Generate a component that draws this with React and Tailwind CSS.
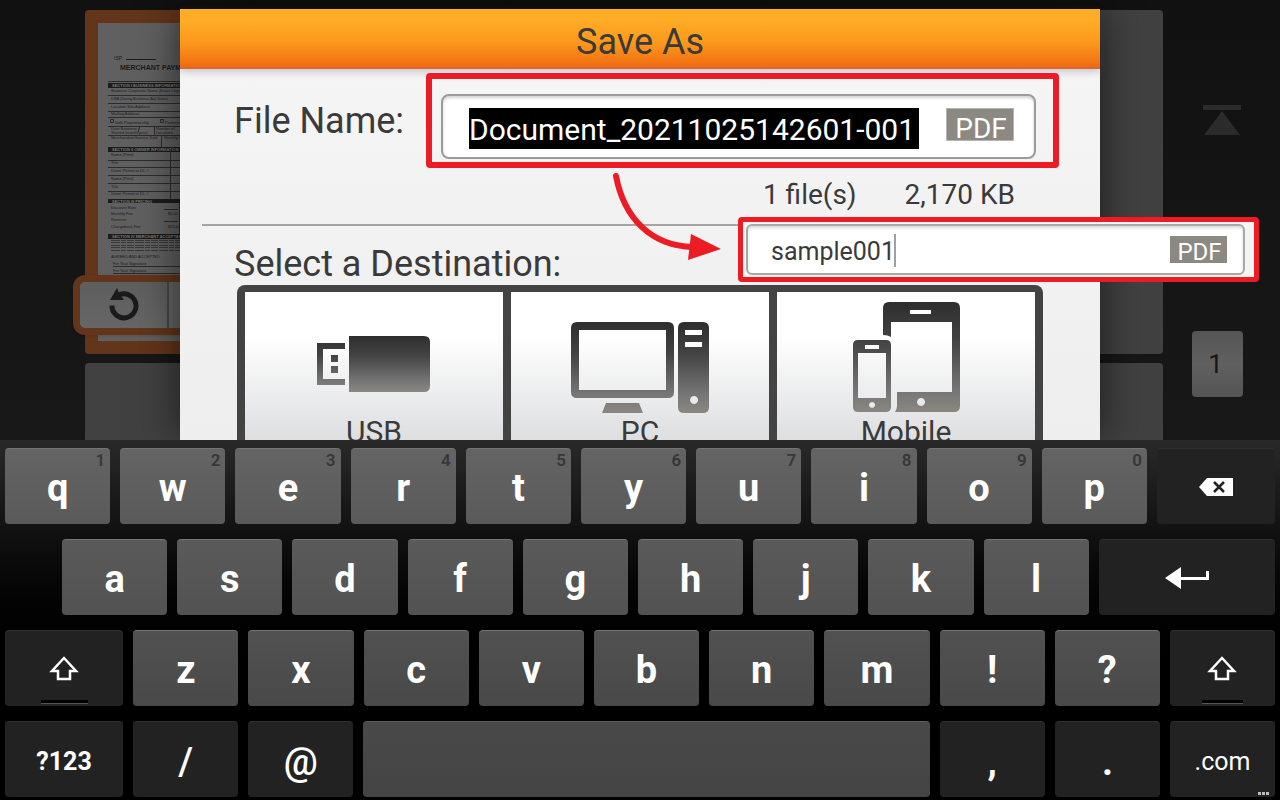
import React, { useState } from "react";

const DESTINATIONS = [
  { label: "USB", icon: UsbIcon },
  { label: "PC", icon: PcIcon },
  { label: "Mobile", icon: MobileIcon },
];

const ROW_ONE = [
  { key: "q", hint: "1" },
  { key: "w", hint: "2" },
  { key: "e", hint: "3" },
  { key: "r", hint: "4" },
  { key: "t", hint: "5" },
  { key: "y", hint: "6" },
  { key: "u", hint: "7" },
  { key: "i", hint: "8" },
  { key: "o", hint: "9" },
  { key: "p", hint: "0" },
];
const ROW_TWO = ["a", "s", "d", "f", "g", "h", "j", "k", "l"];
const ROW_THREE = ["z", "x", "c", "v", "b", "n", "m", "!", "?"];

function IconGradient({ id, y1, y2 }) {
  return (
    <linearGradient id={id} gradientUnits="userSpaceOnUse" x1="0" y1={y1} x2="0" y2={y2}>
      <stop offset="0" stopColor="#2e2e2e" />
      <stop offset="0.35" stopColor="#434343" />
      <stop offset="0.8" stopColor="#757575" />
      <stop offset="1" stopColor="#8a8780" />
    </linearGradient>
  );
}

function UsbIcon() {
  return (
    <svg className="flex-none" width="114" height="114" viewBox="0 0 114 114" aria-hidden="true">
      <defs>
        <IconGradient id="usb" y1="36" y2="92" />
      </defs>
      <g fill="url(#usb)">
        <path d="M0 43h28v6H6v30h22v6H0z" />
        <path d="M14 55h7v7h-7zM14 66h7v7h-7z" />
        <path d="M32 36h75q6 0 6 6v44q0 6-6 6H32z" />
      </g>
    </svg>
  );
}

function PcIcon() {
  return (
    <svg className="flex-none" width="140" height="114" viewBox="0 0 140 114" aria-hidden="true">
      <defs>
        <IconGradient id="pc" y1="22" y2="112" />
      </defs>
      <g fill="url(#pc)" fillRule="evenodd">
        <path d="M7 22h91q6 0 6 6v64q0 6-6 6H7q-6 0-6-6V28q0-6 6-6zM9 30v60h87V30z" />
        <path d="M36 103h33l4 10H32z" />
        <path d="M114 22h19q6 0 6 6v79q0 6-6 6h-19q-6 0-6-6V28q0-6 6-6zM115 30v5h17v-5zM115 42v5h17v-5zM124 96a4 4 0 1 0 .1 0z" />
      </g>
    </svg>
  );
}

function MobileIcon() {
  return (
    <svg className="flex-none" width="110" height="114" viewBox="0 0 110 114" aria-hidden="true">
      <defs>
        <IconGradient id="mobile" y1="2" y2="112" />
      </defs>
      <g fill="url(#mobile)" fillRule="evenodd">
        <path d="M38 2h65q6 0 6 6v98q0 6-6 6H44q2-3 2-6V92h55V22H40v15q-3-2-8-2V8q0-6 6-6zM59 10v4h21v-4zM70 98a4 4 0 1 0 .1 0z" />
        <path d="M7 40h28q5 0 5 5v62q0 5-5 5H7q-5 0-5-5V45q0-5 5-5zM7 53v45h28V53zM14 45v4h14v-4zM21 102a3 3 0 1 0 .1 0z" />
      </g>
    </svg>
  );
}

function ShiftIcon() {
  return (
    <svg width="30" height="26" viewBox="0 0 30 26" aria-hidden="true">
      <path d="M15 2L27 15h-6v8H9v-8H3z" fill="none" stroke="#fff" strokeWidth="2.5" />
    </svg>
  );
}

// Scanned form shown in the page thumbnail
function FormPreview() {
  return (
    <svg className="block" width="260" height="318" viewBox="0 0 260 318" aria-hidden="true">
      <rect width="260" height="318" fill="#606060" />
      <g fill="#1c1c1c" fontFamily="'Liberation Sans', Arial, sans-serif">
        <text x="16" y="37" fontSize="5">ISP:</text>
        <path d="M28 36h30v1H28z" />
        <text x="22" y="47" fontSize="7" fontWeight="bold">MERCHANT PAYMENT</text>
        <path d="M10 60h240v5H10zM10 124h240v5H10zM10 176h240v4H10zM10 211h240v5H10z" />
        <g fontSize="4" fontWeight="bold" fill="#7a7a7a">
          <text x="14" y="64">SECTION I    BUSINESS INFORMATION</text>
          <text x="14" y="128">SECTION II   OWNER INFORMATION</text>
          <text x="14" y="180">SECTION III  PRICING</text>
          <text x="14" y="215">SECTION IV   MERCHANT ACCEPTANCE</text>
        </g>
        <g fontSize="4">
          <text x="13" y="69">Business Corporate Name (Exact Legal Name)</text>
          <text x="13" y="77">DBA (Doing Business As) Name</text>
          <text x="13" y="85">Location Site Address</text>
          <text x="13" y="92">Mailing Address</text>
          <text x="17" y="101">Sole Proprietorship</text>
          <text x="67" y="101">Partnership</text>
          <text x="13" y="107">Date Business</text>
          <text x="13" y="111">Started (month/year)</text>
          <text x="58" y="107">Number of</text>
          <text x="58" y="111">Locations</text>
          <text x="13" y="116">Merchandise/Service Sold</text>
          <text x="66" y="116">Monthly Sales</text>
          <text x="13" y="133">Name (Print)</text>
          <text x="13" y="141">Title</text>
          <text x="13" y="149">Driver Permit or DL #</text>
          <text x="13" y="157">Name (Print)</text>
          <text x="13" y="165">Title</text>
          <text x="13" y="172">Driver Permit or DL #</text>
          <text x="13" y="186">Discount Rate</text>
          <text x="13" y="192">Monthly Fee</text>
          <text x="13" y="198">Reserve</text>
          <text x="13" y="205">Chargeback Fee</text>
          <text x="70" y="192">$5.00</text>
          <text x="70" y="205">$25.00</text>
          <text x="13" y="235">AGREED AND ACCEPTED</text>
          <text x="15" y="242">For Your Signature</text>
          <text x="15" y="249">For Your Signature</text>
        </g>
      </g>
      <g stroke="#2c2c2c" fill="none">
        <path d="M10 58.500h240M10 72.500h240M10 80.500h240M10 88.500h240M10 94.500h240M10 103.500h240M10 112.500h240M10 137.500h240M10 144.500h240M10 152.500h240M10 160.500h240M10 168.500h240" />
        <path d="M56.500 103v9M63.500 112v12M72.500 129v47M81.500 180v31M66 186.500h14M66 198.500h14M15 243.500h240M15 250.500h240M40 109l2-6" />
        <path d="M12.500 96.500h3v3h-3zM62.500 96.500h3v3h-3z" />
        <path d="M13 217.500h240M13 219.500h240M13 222.500h240M13 224.500h240M13 227.500h240M10 252.500h240" strokeDasharray="9 1 5 1 7 1" stroke="#383838" />
      </g>
    </svg>
  );
}

function Viewer() {
  return (
    <div className="col-start-1 row-start-1 flex min-w-0 bg-gradient-to-b from-[#111111] to-[#181818] pl-[85px]">
      <div className="flex min-w-0 flex-1 flex-col gap-[9px] pt-[10px]">
        <div className="relative h-[344px] flex-none rounded bg-gradient-to-r from-[#63351a] from-20% to-[#414141] to-50%">
          <div className="box-content h-[318px] w-1/4 overflow-hidden pl-[13px] pt-[13px]">
            <FormPreview />
          </div>
          <div className="absolute -left-3 top-[265px] flex h-[60px] w-[200px] rounded-xl border-[7px] border-[#63351a] bg-[#656565] shadow">
            <button aria-label="Rotate" className="flex w-[89px] items-center justify-center rounded-l-md border-r-2 border-[#474747] bg-gradient-to-b from-[#5e5e5e] to-[#666666]">
              <svg width="32" height="34" viewBox="0 0 32 34" aria-hidden="true">
                <path d="M10 7.500A12 12 0 1 1 4 17.500" fill="none" stroke="#1b1b1b" strokeWidth="5" />
                <path d="M9 0l2 5 5 7-14 0z" fill="#1b1b1b" />
              </svg>
            </button>
          </div>
        </div>
        <div className="flex-1 rounded-t bg-[#414141]"></div>
      </div>
      <div className="flex w-[117px] flex-none flex-col items-start pl-[29px] pt-[105px]">
        <button aria-label="First page" className="ml-[11px] block">
          <svg width="38" height="31" viewBox="0 0 38 31" aria-hidden="true">
            <path d="M0 0h38v5H0zM19 6l18 24H1z" fill="#2b2b2b" />
          </svg>
        </button>
        <div className="mt-[195px] flex h-[66px] w-[51px] items-center justify-center rounded-sm bg-gradient-to-b from-[#555555] via-[#606060] to-[#545454] pr-1 text-[26px] text-[#171717]">
          1
        </div>
      </div>
    </div>
  );
}

function DestinationButton({ label, icon: Icon }) {
  return (
    <button className="flex flex-1 flex-col items-center justify-start bg-gradient-to-b from-white from-25% to-[#d6d7da] pt-2">
      <Icon />
      <span className="text-[30px] leading-9">{label}</span>
    </button>
  );
}

function SaveAsDialog({ fileName, onChange }) {
  return (
    <div
      role="dialog"
      aria-label="Save As"
      className="relative z-10 col-start-1 row-start-1 mx-[180px] mt-[9px] flex flex-col bg-gradient-to-b from-[#f6f6f6] to-[#eeeeee] text-[#3a3a3a] shadow-[0_0_40px_rgba(0,0,0,0.6)]"
    >
      <h1 className="h-[60px] flex-none border-b-2 border-[#e0662a] bg-gradient-to-b from-[#ffac26] from-20% via-[#fb971b] via-60% to-[#f06a12] text-center text-[36px] leading-[66px] shadow-[0_2px_8px_rgba(60,60,110,0.3)]">
        Save As
      </h1>
      <div className="flex items-start pl-[54px] pr-[41px] pt-1">
        <label htmlFor="file-name" className="mt-6 flex-1 whitespace-nowrap text-[36px] leading-[48px]">
          File Name:
        </label>
        <div className="h-[95px] w-[633px] rounded border-[6px] border-[#ec1c24] pl-[9px] pr-[17px] pt-[15px]">
          <div className="flex h-[65px] items-center rounded-lg border-2 border-[#9b9b9b] bg-white pl-[26px] pr-5 pt-1 shadow-[inset_0_2px_3px_rgba(0,0,0,0.18)]">
            <input
              id="file-name"
              className="h-[41px] w-[450px] bg-black pt-[2px] text-[30px] text-white outline-none"
              defaultValue="Document_20211025142601-001"
            />
            <span className="-mt-2 ml-auto h-[33px] w-[68px] border border-[#b5b5b5] bg-[#8c8982] pl-[2px] text-center text-[28px] leading-[40px] text-white">
              PDF
            </span>
          </div>
        </div>
      </div>
      <div className="flex justify-end gap-12 pr-[85px] pt-2 text-[28px] leading-[38px]">
        <span>1 file(s)</span>
        <span>2,170 KB</span>
      </div>
      <hr className="mx-[22px] mt-[10px] border-t-2 border-[#a5a5a5]" />
      <h2 className="ml-[54px] mt-[13px] h-[46px] flex-none text-[36px] leading-[50px]">Select a Destination:</h2>
      <div className="mx-[57px] flex h-[180px] flex-none gap-2 rounded-t-lg border-x-8 border-t-[7px] border-[#434343] bg-[#434343]">
        {DESTINATIONS.map((item) => (
          <DestinationButton key={item.label} {...item} />
        ))}
      </div>

      {/* Edited name callout */}
      <svg className="absolute left-[425px] top-[159px]" width="125" height="105" viewBox="0 0 125 105" aria-hidden="true">
        <path d="M11 8C19 50 46 78 88 79" fill="none" stroke="#ec1c24" strokeWidth="6" strokeLinecap="round" />
        <path d="M86 66l30 15-33 11z" fill="#ec1c24" />
      </svg>
      <div className="absolute -right-[159px] top-[208px] w-[521px] rounded-sm border-[5px] border-[#ec1c24] bg-[#f4f4f4] py-[2px] pl-[3px] pr-[9px]">
        <div className="flex h-[51px] items-center rounded-md border-2 border-[#a8a8a8] bg-white pl-[23px] pr-4 shadow-[inset_0_2px_3px_rgba(0,0,0,0.15)]">
          <div className="flex items-center pt-[2px]">
            <input
              aria-label="New file name"
              className="w-[123px] bg-transparent pt-[3px] text-[25px] outline-none"
              value={fileName}
              onChange={(e) => onChange(e.target.value)}
            />
            <span className="h-[33px] w-[2px] bg-[#a0a0a0]"></span>
          </div>
          <span className="ml-auto h-[27px] w-[57px] bg-[#8c8982] pl-[2px] text-center text-[24px] leading-[33px] text-white">
            PDF
          </span>
        </div>
      </div>
    </div>
  );
}

function LetterKey({ label, hint, tone, onPress }) {
  return (
    <button
      onClick={() => onPress(label)}
      className={`relative flex-[105] rounded-sm border-t border-[#747474] pt-[3px] text-[38px] font-bold leading-none text-white ${tone}`}
    >
      {hint && (
        <span className="absolute right-[5px] top-px text-[17px] font-semibold leading-5 text-[#373737]">{hint}</span>
      )}
      {label}
    </button>
  );
}

function DarkKey({ className, children, ...rest }) {
  return (
    <button
      className={`relative flex items-center justify-center rounded-sm border-t border-[#303030] bg-[#222222] leading-none text-white ${className}`}
      {...rest}
    >
      {children}
    </button>
  );
}

function Keyboard({ onType, onDelete }) {
  return (
    <div className="z-20 flex flex-none flex-col gap-[15px] bg-gradient-to-b from-[#292929] to-black to-70% pb-[3px] pt-2">
      <div className="flex h-[76px] gap-[10px] px-[5px]">
        {ROW_ONE.map((k) => (
          <LetterKey key={k.key} label={k.key} hint={k.hint} tone="bg-gradient-to-b from-[#646464] to-[#5a5a5a]" onPress={onType} />
        ))}
        <DarkKey className="flex-[118]" aria-label="Backspace" onClick={onDelete}>
          <svg width="34" height="18" viewBox="0 0 34 18" aria-hidden="true">
            <path d="M0 9l8-9h26v18H8z" fill="#fff" />
            <path d="M15 4l10 10M25 4L15 14" stroke="#222" strokeWidth="2.5" />
          </svg>
        </DarkKey>
      </div>
      <div className="flex h-[76px] gap-[10px] pl-[62px] pr-[5px]">
        {ROW_TWO.map((k) => (
          <LetterKey key={k} label={k} tone="bg-gradient-to-b from-[#5a5a5a] to-[#525252]" onPress={onType} />
        ))}
        <DarkKey className="flex-[176]" aria-label="Enter">
          <svg width="44" height="24" viewBox="0 0 44 24" aria-hidden="true">
            <path d="M0 12L16 1v22zM16 11h25V5h3v9H16z" fill="#fff" />
          </svg>
        </DarkKey>
      </div>
      <div className="flex h-[76px] gap-[10px] px-[5px]">
        <DarkKey className="flex-[118]" aria-label="Shift">
          <ShiftIcon />
          <span className="absolute bottom-[2px] h-1 w-[47px] border-b border-[#555555] bg-black"></span>
        </DarkKey>
        {ROW_THREE.map((k) => (
          <LetterKey key={k} label={k} tone="bg-gradient-to-b from-[#515151] to-[#494949]" onPress={onType} />
        ))}
        <DarkKey className="flex-[105]" aria-label="Right shift">
          <ShiftIcon />
          <span className="absolute bottom-[2px] h-1 w-[41px] border-b border-[#555555] bg-black"></span>
        </DarkKey>
      </div>
      <div className="flex h-[76px] gap-[10px] px-[5px]">
        <DarkKey className="flex-[118] pt-1 text-[25px] font-bold">?123</DarkKey>
        <DarkKey className="flex-[105] pt-1 text-[38px] font-medium" onClick={() => onType("/")}>/</DarkKey>
        <DarkKey className="flex-[105] pt-1 text-[38px] font-medium" onClick={() => onType("@")}>@</DarkKey>
        <button
          aria-label="Space"
          onClick={() => onType(" ")}
          className="flex-[566] rounded-sm border-t border-[#5c5c5c] bg-gradient-to-b from-[#494949] to-[#444444]"
        ></button>
        <DarkKey className="flex-[105] pt-1 text-[38px] font-bold" onClick={() => onType(",")}>,</DarkKey>
        <DarkKey className="flex-[105] pt-1 text-[38px] font-bold" onClick={() => onType(".")}>.</DarkKey>
        <DarkKey className="flex-[105] pt-1 text-[25px]" onClick={() => onType(".com")}>
          .com
          <span className="absolute bottom-[2px] right-[6px] flex gap-px">
            <i className="size-[3px] bg-[#bbbbbb]"></i>
            <i className="size-[3px] bg-[#bbbbbb]"></i>
            <i className="size-[3px] bg-[#bbbbbb]"></i>
          </span>
        </DarkKey>
      </div>
    </div>
  );
}

export default function App() {
  const [fileName, setFileName] = useState("sample001");

  return (
    <div className="flex h-screen flex-col overflow-hidden bg-[#141414] font-['Roboto',sans-serif]">
      <div className="grid min-h-0 flex-1 grid-cols-1 grid-rows-1 overflow-hidden">
        <Viewer />
        <SaveAsDialog fileName={fileName} onChange={setFileName} />
      </div>
      <Keyboard
        onType={(text) => setFileName((name) => name + text)}
        onDelete={() => setFileName((name) => name.slice(0, -1))}
      />
    </div>
  );
}
